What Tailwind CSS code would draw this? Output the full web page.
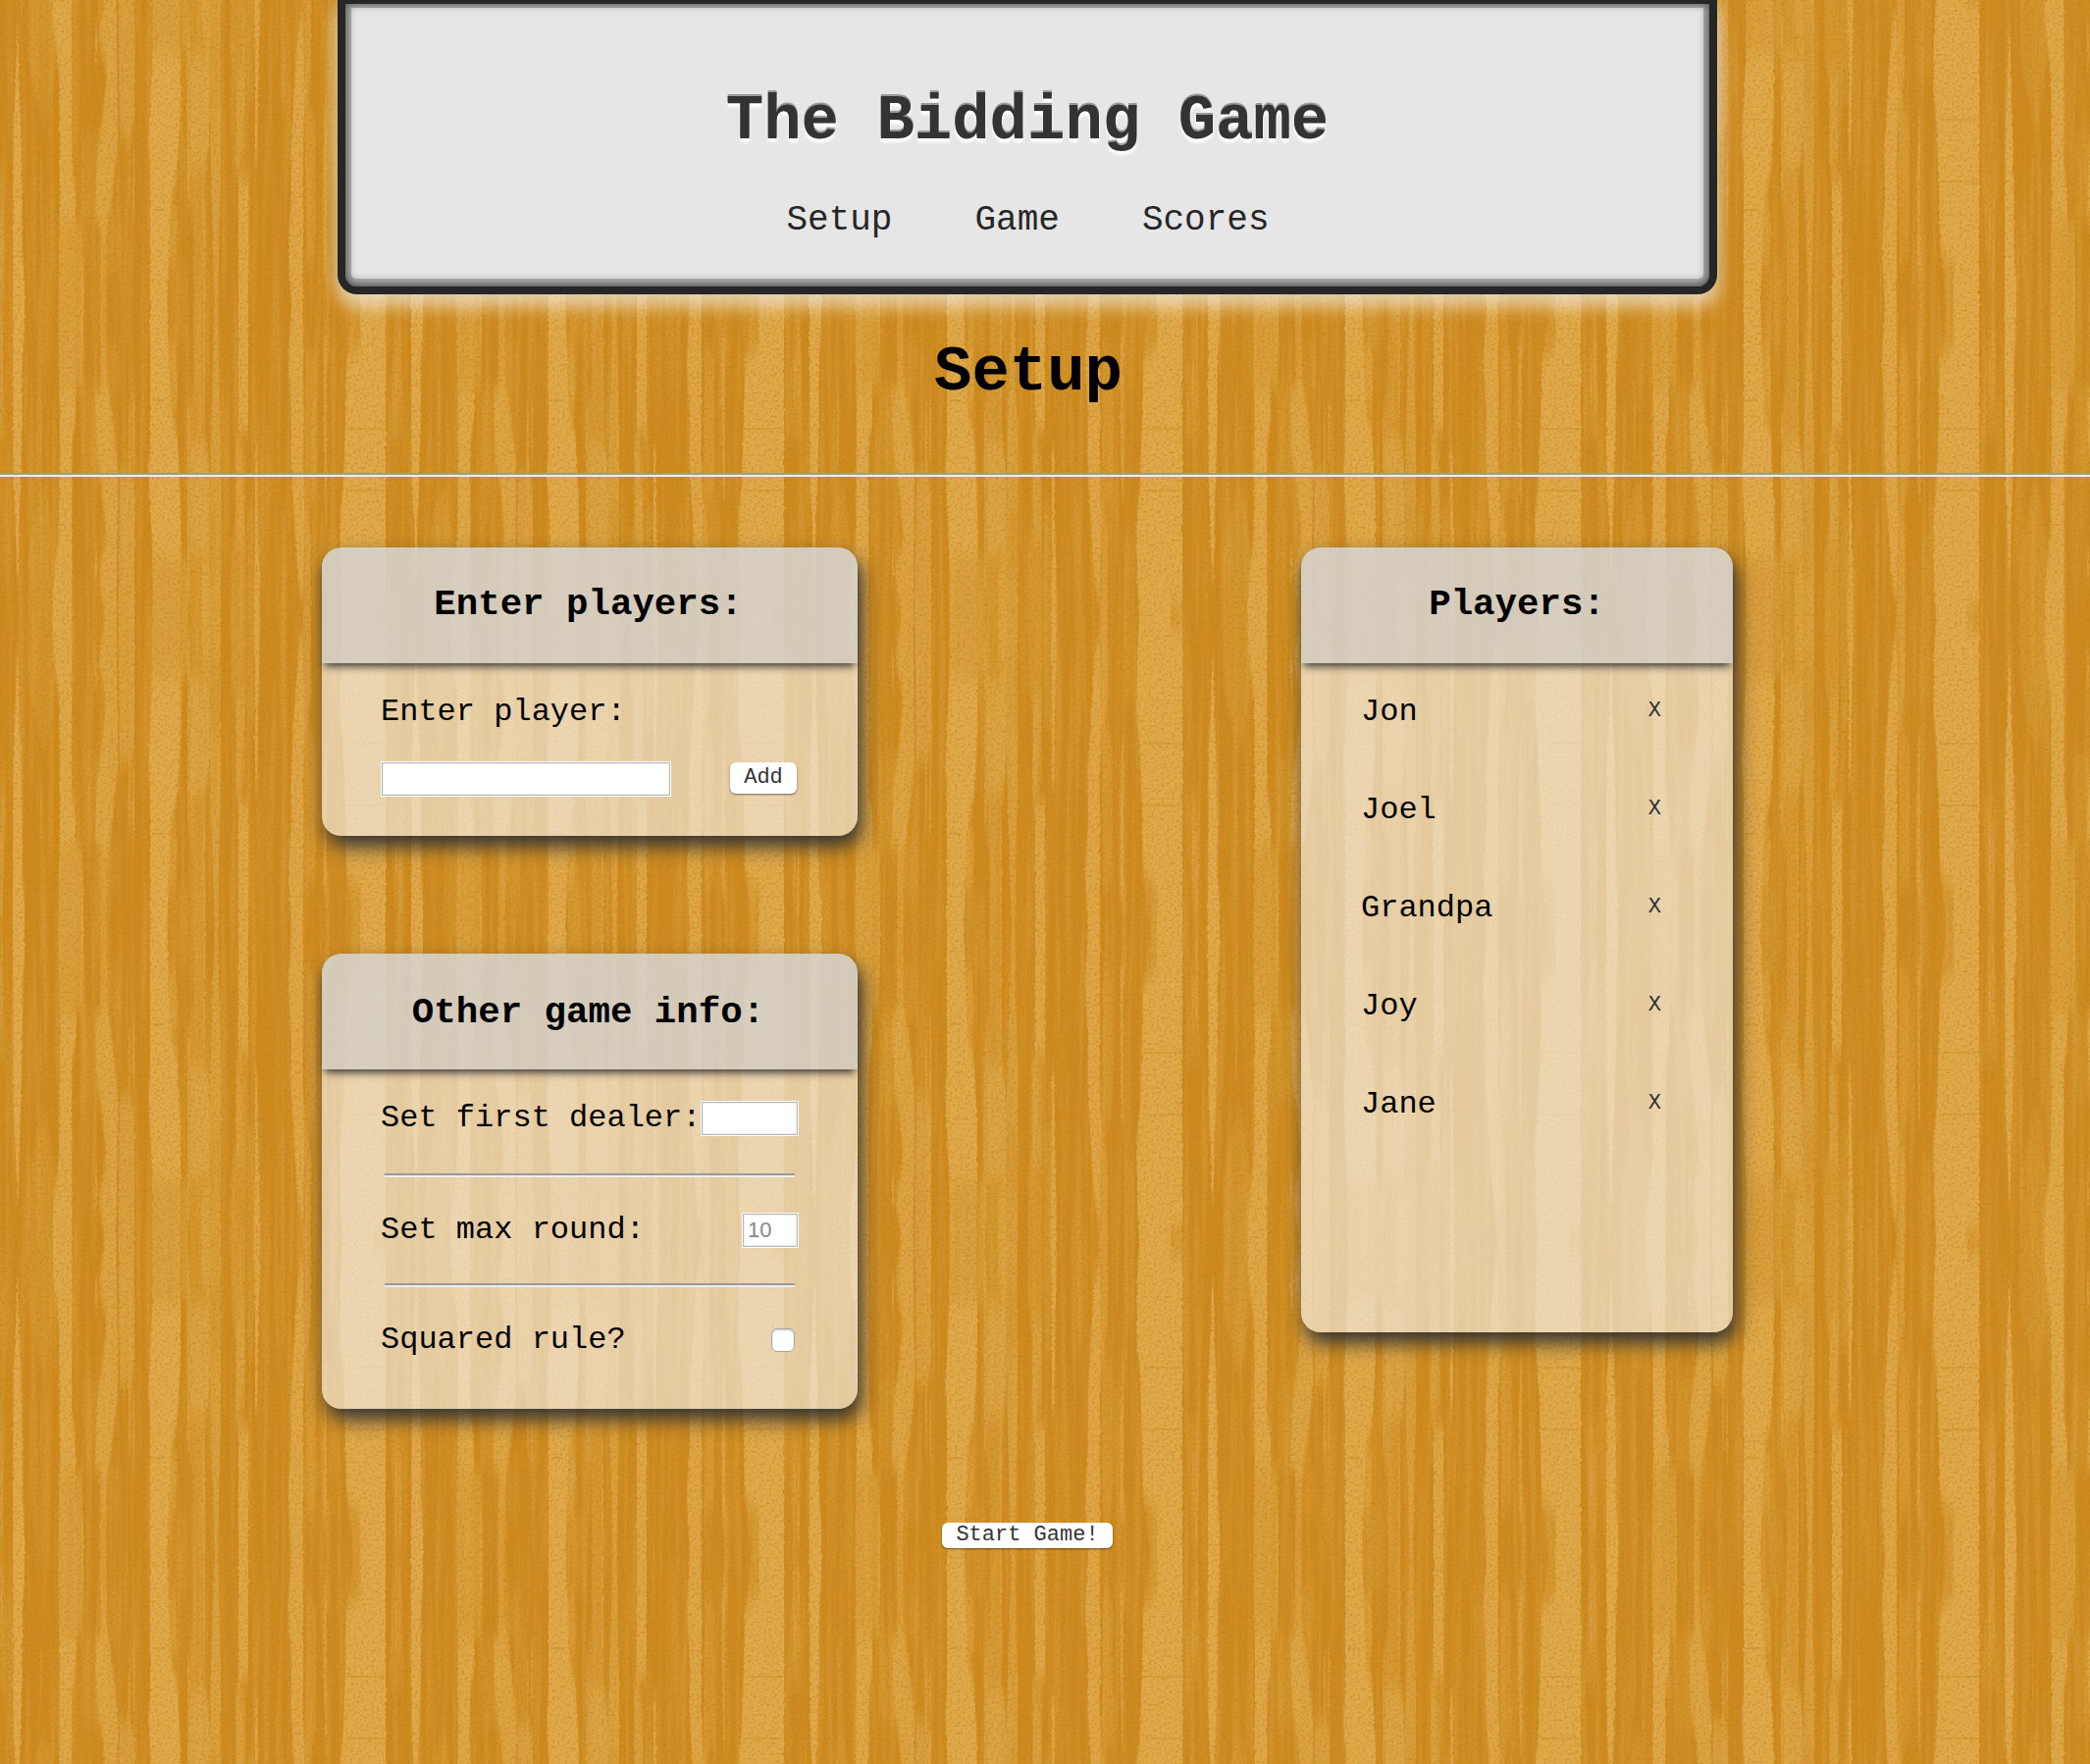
<!DOCTYPE html>
<html lang="en">
<head>
<meta charset="utf-8">
<title>The Bidding Game</title>
<script src="https://cdn.jsdelivr.net/npm/@tailwindcss/browser@4"></script>
</head>
<body class="relative isolate h-[1798px] w-[2130px] overflow-hidden bg-[#cc8a1f] font-['Liberation_Mono','Courier_New',monospace] text-black">

<!-- wood grain -->
<svg class="absolute inset-0 -z-10" width="2130" height="1798" aria-hidden="true">
  <defs>
    <filter id="rough" x="0" y="0" width="100%" height="100%" color-interpolation-filters="sRGB">
      <feGaussianBlur in="SourceGraphic" stdDeviation="0.5 9" result="b"/>
      <feTurbulence type="fractalNoise" baseFrequency="0.3 0.2" numOctaves="2" seed="4" result="n"/>
      <feDisplacementMap in="b" in2="n" scale="3" xChannelSelector="R" yChannelSelector="G" result="d"/>
      <feGaussianBlur in="d" stdDeviation="0.5 0.3"/>
    </filter>
    <filter id="streaks" x="0" y="0" width="100%" height="100%" color-interpolation-filters="sRGB">
      <feTurbulence type="fractalNoise" baseFrequency="0.16 0.005" numOctaves="3" seed="9"/>
      <feColorMatrix values="0 0 0 0 0.87  0 0 0 0 0.66  0 0 0 0 0.29  3 0 0 0 -1.2"/>
    </filter>
    <filter id="specks" x="0" y="0" width="100%" height="100%" color-interpolation-filters="sRGB">
      <feTurbulence type="fractalNoise" baseFrequency="0.38" numOctaves="2" seed="2"/>
      <feColorMatrix values="0 0 0 0 0.76  0 0 0 0 0.49  0 0 0 0 0.07  3 0 0 0 -1.4"/>
    </filter>
    <g id="planks" fill="#dfab4e">
      <path opacity=".5" d="M0 700H22V954H0Z"/>
      <path opacity=".6" d="M19 820H24V954H19Z"/>
      <path opacity=".22" d="M20 420H100V700H20Z"/>
      <path opacity=".75" d="M90 0H125L130 450L110 640L95 720L60 690L65 500L80 400L95 250L70 130Z"/>
      <path opacity=".65" d="M130 0H180V400L165 440H135Z"/>
      <path opacity=".7" d="M60 110H66V210H60Z"/>
      <path opacity=".55" d="M162 420H167V640H162ZM175 470H180V680H175Z"/>
      <path opacity=".5" d="M75 700H95V954H75Z"/>
      <path opacity=".2" d="M80 680H140V850H80Z"/>
      <path opacity=".65" d="M235 0H320V200H235Z"/>
      <path opacity=".95" d="M235 190H322L320 380L310 560L290 640L280 954H228V500L222 470L230 300Z"/>
      <path opacity=".55" d="M285 640H308L312 720L305 830H285Z"/>
      <path opacity=".2" d="M285 830H345V954H285Z"/>
      <path opacity=".45" d="M322 0H345V180H322Z"/>
      <path opacity=".7" d="M343 60H349V640H343Z"/>
      <path opacity=".35" d="M350 0H408V200H350Z"/>
      <path opacity=".75" d="M350 190H408V470L398 540H350Z"/>
      <path opacity=".4" d="M350 540H395V954H360V700H350Z"/>
      <path opacity=".45" d="M391 620H396V954H391Z"/>
      <path opacity=".6" d="M385 0H444V130H410V350H444V560L440 700L436 954H425L415 600L410 400H408V180L385 130Z"/>
      <path opacity=".45" d="M410 130H444V360H410Z"/>
      <path opacity=".35" d="M475 0H520V240L505 500L490 550V300L475 200Z"/>
      <path opacity=".45" d="M492 230H518V500L500 560H490Z"/>
      <path opacity=".85" d="M498 565H528V954H498Z"/>
      <path opacity=".85" d="M545 0H563V110L558 300L556 520H549V200Z"/>
      <path opacity=".3" d="M525 0H547V340H525Z"/>
      <path opacity=".3" d="M628 0H640V330H628Z"/>
      <path opacity=".55" d="M692 0H720V260L700 350V60Z"/>
      <path opacity=".85" d="M690 60L697 60L700 350L695 500L697 620L695 954H660L650 780L660 620L658 480L672 240L680 120Z"/>
      <path opacity=".35" d="M700 280L735 400V800L705 850Z"/>
      <path opacity=".6" d="M763 360H768V760L770 850H758V560Z"/>
      <path opacity=".3" d="M758 780H778V954H768Z"/>
      <path opacity=".22" d="M770 0H802V260H770Z"/>
      <path opacity=".95" d="M817 0H912V40H948V954H870L872 830L828 780L825 600L818 400L808 300L810 110Z"/>
      <path opacity=".4" d="M912 0H948V40H912ZM828 770H872V954H850Z"/>
      <path opacity=".25" d="M955 540H1005L995 940H980Z"/>
      <path opacity=".55" d="M979 650H984V800H979ZM989 650H994V920H989Z"/>
      <path opacity=".95" d="M1039 120H1043L1046 300L1050 400L1055 600V800L1062 860V954H1026L1028 420L1034 300Z"/>
      <path opacity=".28" d="M1072 0H1160V180L1130 400H1115L1072 200Z"/>
      <path opacity=".35" d="M1110 490H1115V680H1110Z"/>
      <path opacity=".9" d="M1147 0H1207V540L1218 600V680L1170 700L1168 260L1150 100Z"/>
      <path opacity=".6" d="M1168 690L1218 670V954H1165Z"/>
    </g>
    <g id="cracks" fill="#c08018">
      <path d="M825 385H942V389H825ZM825 574H942V578H825ZM232 660H270V666H232ZM350 135H408V138H350Z"/>
    </g>
    <pattern id="wood" patternUnits="userSpaceOnUse" x="77" y="311" width="406" height="636">
      <use href="#planks" transform="translate(0 318) scale(.33333)"/>
      <use href="#planks" transform="translate(0 318) scale(.33333 -.33333)"/>
    </pattern>
    <pattern id="marks" patternUnits="userSpaceOnUse" x="78" y="311" width="406" height="636">
      <use href="#cracks" transform="translate(0 318) scale(.33333)"/>
      <use href="#cracks" transform="translate(0 318) scale(.33333 -.33333)"/>
    </pattern>
  </defs>
  <rect width="2130" height="1798" fill="#cc8a1f"/>
  <rect width="2130" height="1798" filter="url(#streaks)" opacity=".38"/>
  <g filter="url(#rough)"><rect y="-40" width="2130" height="1878" fill="url(#wood)"/></g>
  <rect width="2130" height="1798" fill="url(#marks)" opacity=".35"/>
  <rect width="2130" height="1798" filter="url(#specks)" opacity=".5"/>
</svg>

<header class="ml-[344px] h-[300px] w-[1406px] rounded-b-[20px] bg-[#262626] px-2 pt-1 pb-2 shadow-[0_12px_16px_2px_rgba(255,255,255,0.5),0_0_16px_rgba(170,170,180,0.4)]">
  <div class="h-full rounded-b-[12px] bg-[#adadad] px-1.5 pt-1 pb-2 shadow-[inset_0_-1px_9px_1px_#4a4a4a]">
    <div class="flex h-full flex-col items-center rounded-b-[5px] bg-[#e6e6e6] pt-[84px] shadow-[inset_0_0_6px_rgba(0,0,0,0.2)]">
      <h1 class="text-[64px] leading-[64px] font-bold text-[#333] [text-shadow:0_-2px_0_#999,0_4px_3px_#fff]">The Bidding Game</h1>
      <nav class="mt-[49px] flex gap-[84px] pl-px text-[36px] leading-[40px] text-[#262626]">
        <a>Setup</a><a>Game</a><a>Scores</a>
      </nav>
    </div>
  </div>
</header>

<h2 class="mt-[48px] ml-[345px] w-[1406px] text-center text-[64px] leading-[64px] font-bold">Setup</h2>
<div class="mt-[70px] h-1 border-t-2 border-b-2 border-t-[#9a9a9a] border-b-[#eee]"></div>

<main class="mt-[72px] ml-[328px] flex w-[1438px] items-start justify-between text-[32px] leading-[36px]">
  <div class="flex w-[546px] flex-col gap-[120px]">
    <section class="h-[294px] rounded-[20px] bg-[#f5f5f5]/60 shadow-[4px_11px_20px_#333]">
      <h3 class="h-[118px] rounded-t-[20px] bg-[#cacaca]/60 pt-[38px] pr-[3px] text-center text-[37.44px] leading-[40px] font-bold shadow-[0_6px_8px_-3px_#333]">Enter players:</h3>
      <div class="px-[60px] pt-8">
        <p>Enter player:</p>
        <div class="mt-8 flex items-start justify-between pr-0.5">
          <div class="h-9 w-[296px] border border-white bg-white"><div class="h-full border border-[#b8b8b8] shadow-[inset_0_0_0_1px_#eee]"></div></div>
          <button class="mt-px h-8 w-[68px] rounded-[6px] bg-white pb-px text-[22px] leading-[28px] text-[#333] shadow-[0_1px_2px_rgba(0,0,0,0.5)]">Add</button>
        </div>
      </div>
    </section>

    <section class="h-[464px] rounded-[20px] bg-[#f5f5f5]/60 shadow-[4px_11px_20px_#333]">
      <h3 class="h-[118px] rounded-t-[20px] bg-[#cacaca]/60 pt-[40px] pr-[3px] text-center text-[37.44px] leading-[40px] font-bold shadow-[0_6px_8px_-3px_#333]">Other game info:</h3>
      <div class="px-[60px] pt-[32px]">
        <div class="flex h-9 justify-between">
          <p class="whitespace-nowrap">Set first dealer:</p>
          <div class="h-9 w-[100px] border border-white bg-white"><div class="h-full border border-[#b8b8b8] shadow-[inset_0_0_0_1px_#eee]"></div></div>
        </div>
        <div class="mx-1 mt-[38px] h-1 border-t-2 border-b-2 border-t-[#9a9a9a] border-b-[#eee]"></div>
        <div class="mt-9 flex h-9 justify-between">
          <p>Set max round:</p>
          <div class="h-9 w-[58px] border border-white bg-white"><div class="h-full border border-[#b8b8b8] pl-1 font-['Liberation_Sans',Arial,sans-serif] text-[22px] leading-[32px] text-[#888] shadow-[inset_0_0_0_1px_#eee]">10</div></div>
        </div>
        <div class="mx-1 mt-9 h-1 border-t-2 border-b-2 border-t-[#9a9a9a] border-b-[#eee]"></div>
        <div class="mt-9 flex h-9 justify-between pr-1">
          <p>Squared rule?</p>
          <div class="mt-1.5 size-6 rounded-[6px] border border-[#a5a5a5] bg-white shadow-[inset_0_1px_2px_#ccc]"></div>
        </div>
      </div>
    </section>
  </div>

  <section class="h-[800px] w-[440px] rounded-[20px] bg-[#f5f5f5]/60 shadow-[4px_11px_20px_#333]">
    <h3 class="h-[118px] rounded-t-[20px] bg-[#cacaca]/60 pt-[38px] text-center text-[37.44px] leading-[40px] font-bold shadow-[0_6px_8px_-3px_#333]">Players:</h3>
    <ul class="flex flex-col gap-16 pt-8 pr-[73px] pl-[61px]">
      <li class="flex h-9 justify-between"><span>Jon</span><span class="text-[22px] leading-[34px] text-[#333]">X</span></li>
      <li class="flex h-9 justify-between"><span>Joel</span><span class="text-[22px] leading-[34px] text-[#333]">X</span></li>
      <li class="flex h-9 justify-between"><span>Grandpa</span><span class="text-[22px] leading-[34px] text-[#333]">X</span></li>
      <li class="flex h-9 justify-between"><span>Joy</span><span class="text-[22px] leading-[34px] text-[#333]">X</span></li>
      <li class="flex h-9 justify-between"><span>Jane</span><span class="text-[22px] leading-[34px] text-[#333]">X</span></li>
    </ul>
  </section>
</main>

<button class="mt-[116px] ml-[960px] block h-[26px] w-[174px] rounded-[6px] bg-white text-[22px] leading-[26px] text-[#333] shadow-[0_1px_2px_rgba(0,0,0,0.5)]">Start Game!</button>
</body>
</html>
